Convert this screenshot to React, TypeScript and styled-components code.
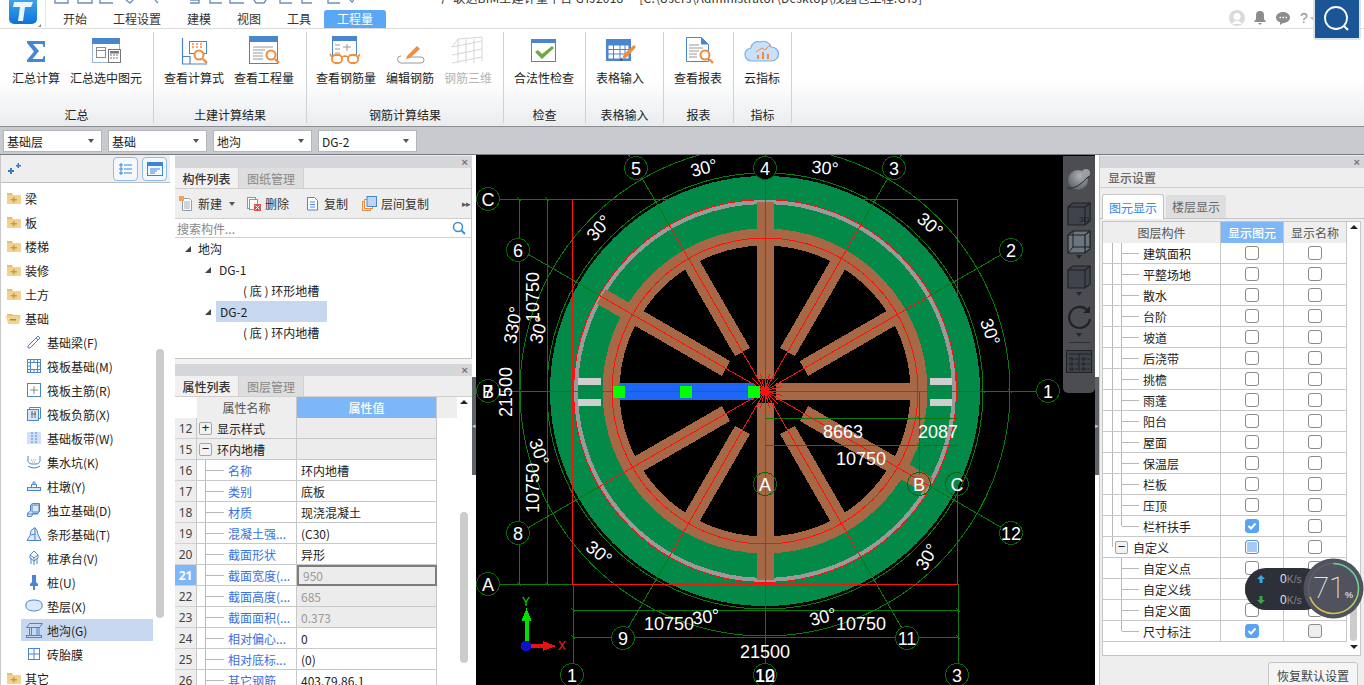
import React from "react";
import styled, { createGlobalStyle } from "styled-components";

const Global = createGlobalStyle`
  html, body { margin: 0; padding: 0; background: #fff; overflow: hidden; }
  * { box-sizing: border-box; }
  body { font-family: "Noto Sans CJK SC", "Noto Sans", sans-serif; font-size: 12px; color: #222; }
`;

const BLUE = "#4a86d0";
const ORANGE = "#f08c3c";

const Page = styled.div`
  position: relative;
  width: 1364px;
  height: 685px;
  overflow: hidden;
  display: flex;
  flex-direction: column;
`;

/* ---------- Top bar ---------- */
const TopBar = styled.header`
  height: 29px;
  flex: none;
  display: flex;
  background: #fff;
  border-bottom: 1px solid #dcdcdc;
`;
const LogoBox = styled.div`
  width: 46px;
  flex: none;
  border-right: 1px solid #e8e8e8;
  overflow: hidden;
`;
const TopMain = styled.div`
  flex: 1;
  display: flex;
  flex-direction: column;
`;
const TitleStrip = styled.div`
  height: 5px;
  margin-bottom: 5px;
  display: flex;
  align-items: flex-end;
  overflow: hidden;
`;
const QuickIcons = styled.svg`
  width: 300px;
  height: 5px;
  margin-left: 8px;
  flex: none;
`;
const TitleText = styled.span`
  margin-left: 87px;
  font-size: 12px;
  line-height: 17px;
  margin-bottom: -1px;
  white-space: pre;
  letter-spacing: 0.2px;
  color: #333;
`;
const TabRow = styled.nav`
  flex: 1;
  display: flex;
  align-items: stretch;
  padding-left: 4px;
`;
const TopTab = styled.div<{ $active?: boolean }>`
  padding: 0 13px;
  display: flex;
  align-items: center;
  line-height: 18px;
  font-size: 12px;
  border-radius: 3px 3px 0 0;
  color: ${(p) => (p.$active ? "#fff" : "#333")};
  background: ${(p) => (p.$active ? "#5aa7f4" : "transparent")};
`;
const Utilities = styled.div`
  margin-left: auto;
  margin-right: 48px;
  display: flex;
  align-items: center;
  gap: 8px;
  height: 18px;
  margin-top: -1px;
`;
const SearchBadge = styled.div`
  position: absolute;
  left: 1313px;
  top: 0;
  width: 48px;
  height: 40px;
  background: #1a5596;
  border: 2px solid #dfe3e8;
  border-top: none;
  border-radius: 0 0 3px 3px;
  display: flex;
  align-items: center;
  justify-content: center;
`;

/* ---------- Ribbon ---------- */
const Ribbon = styled.section`
  height: 98px;
  flex: none;
  display: flex;
  background: linear-gradient(#fff 0%, #fff 52%, #eaecee 100%);
  border-bottom: 1px solid #8b8e93;
  padding-top: 3px;
`;
const RibbonGroup = styled.div<{ $w: number }>`
  width: ${(p) => p.$w}px;
  flex: none;
  height: 91px;
  border-right: 1px solid #cfd1d4;
  display: flex;
  flex-direction: column;
  align-items: center;
`;
const RibbonButtons = styled.div<{ $pad: number }>`
  display: flex;
  gap: 10px;
  height: 72px;
  align-self: flex-start;
  padding-left: ${(p) => p.$pad}px;
`;
const RibbonButton = styled.div<{ $disabled?: boolean }>`
  display: flex;
  flex-direction: column;
  align-items: center;
  color: ${(p) => (p.$disabled ? "#b5b5b5" : "#222")};
  white-space: nowrap;
  font-size: 12px;
  line-height: 16px;
`;
const RibbonIconSvg = styled.svg`
  width: 36px;
  height: 30px;
  margin: 3px 0 5px;
  flex: none;
`;
const GroupLabel = styled.div`
  font-size: 12px;
  line-height: 16px;
  margin-top: 3px;
  color: #222;
`;

/* ---------- Selector bar ---------- */
const SelectorBar = styled.div`
  height: 28px;
  flex: none;
  background: #c8cacf;
  border-bottom: 1px solid #777a80;
  display: flex;
  align-items: flex-start;
  gap: 6px;
  padding: 3px 0 0 3px;
`;
const SelectBox = styled.div`
  width: 99px;
  height: 22px;
  background: #fff;
  border: 1px solid #b4b6ba;
  display: flex;
  align-items: center;
  justify-content: space-between;
  padding: 0 7px 0 3px;
  font-size: 12px;
  color: #222;
`;
const Caret = styled.i<{ $c?: string }>`
  width: 0;
  height: 0;
  border-left: 3.5px solid transparent;
  border-right: 3.5px solid transparent;
  border-top: 4px solid ${(p) => p.$c || "#555"};
  display: block;
`;

/* ---------- Main ---------- */
const Main = styled.main`
  flex: 1;
  display: flex;
  min-height: 0;
  background: #fff;
`;

/* Left list */
const LeftPanel = styled.aside`
  width: 175px;
  flex: none;
  display: flex;
  flex-direction: column;
  padding-right: 5px;
  border-left: 1px solid #c9c9c9;
  height: 100%;
`;
const LeftHeader = styled.div`
  height: 28px;
  flex: none;
  background: #eeeeee;
  border-bottom: 1px solid #bdbdbd;
  display: flex;
  align-items: center;
  padding-left: 6px;
  gap: 4px;
`;
const ToggleButton = styled.div<{ $first?: boolean }>`
  width: 25px;
  height: 24px;
  border: 1px solid #8dbcf0;
  border-radius: 4px;
  background: #f4f8fd;
  display: flex;
  align-items: center;
  justify-content: center;
  margin-left: ${(p) => (p.$first ? "auto" : "0")};
  margin-right: ${(p) => (p.$first ? "0" : "3px")};
`;
const LeftBody = styled.div`
  flex: 1;
  display: flex;
  min-height: 0;
  padding-top: 3px;
`;
const LeftList = styled.div`
  flex: 1;
  min-width: 0;
  display: flex;
  flex-direction: column;
`;
const LeftScroll = styled.div`
  width: 17px;
  flex: none;
  padding: 163px 5px 0 3px;
`;
const Thumb = styled.div<{ $h: number; $w?: number }>`
  width: ${(p) => p.$w || 8}px;
  height: ${(p) => p.$h}px;
  background: #cccccc;
  border-radius: 4px;
`;
const FolderRow = styled.div`
  height: 24px;
  flex: none;
  display: flex;
  align-items: center;
  gap: 4px;
  padding-left: 5px;
  font-size: 12px;
`;
const ItemRow = styled.div<{ $selected?: boolean }>`
  height: 22px;
  flex: none;
  margin: 1px 0 1px 20px;
  display: flex;
  align-items: center;
  padding-left: 4px;
  gap: 4px;
  font-size: 12px;
  background: ${(p) => (p.$selected ? "#c6d7ef" : "transparent")};
`;
const ItemIconSvg = styled.svg`
  width: 18px;
  height: 18px;
  flex: none;
`;

/* Centre column */
const CenterColumn = styled.section`
  width: 297px;
  flex: none;
  display: flex;
  flex-direction: column;
  background: #eee;
  padding-top: 1px;
`;
const CloseBar = styled.div`
  height: 12px;
  flex: none;
  background: #d5d6da;
  display: flex;
  align-items: center;
  justify-content: flex-end;
  padding-right: 4px;
  color: #777;
  font: bold 11px/12px "Liberation Sans", sans-serif;
`;
const PanelTabs = styled.div`
  height: 21px;
  flex: none;
  display: flex;
  background: #eee;
  border-bottom: 1px solid #cfcfcf;
`;
const PanelTab = styled.div<{ $active?: boolean }>`
  width: ${(p) => (p.$active ? 64 : 65)}px;
  display: flex;
  align-items: center;
  justify-content: center;
  font-size: 12px;
  font-weight: ${(p) => (p.$active ? 500 : 400)};
  color: ${(p) => (p.$active ? "#333" : "#888")};
  background: ${(p) => (p.$active ? "#f1f1f1" : "#dedede")};
  border-right: 1px solid #cfcfcf;
`;
const ListPanel = styled.div`
  height: 191px;
  flex: none;
  display: flex;
  flex-direction: column;
  border-right: 1px solid #c5c5c5;
  border-bottom: 1px solid #c5c5c5;
`;
const PanelGap = styled.div`
  height: 5px;
  flex: none;
  background: #f2f2f2;
`;
const ToolRow = styled.div`
  height: 30px;
  flex: none;
  display: flex;
  align-items: center;
  padding-left: 4px;
  font-size: 12px;
  color: #333;
  border-bottom: 1px solid #cfcfcf;
`;
const ToolItem = styled.div<{ $gap: number }>`
  display: flex;
  align-items: center;
  gap: 4px;
  margin-right: ${(p) => p.$gap}px;
`;
const ToolCaret = styled(Caret)`
  margin-left: 3px;
`;
const ToolMore = styled.span`
  margin-left: auto;
  padding-right: 1px;
  font: 9px "Liberation Sans", sans-serif;
  letter-spacing: -1px;
  color: #555;
`;
const SearchRow = styled.div`
  height: 19px;
  flex: none;
  background: #fff;
  display: flex;
  align-items: center;
  justify-content: space-between;
  padding: 0 5px 0 2px;
  color: #888;
  border-bottom: 1px solid #cfcfcf;
`;
const TreeBody = styled.div`
  flex: 1;
  background: #fff;
`;
const TreeRow = styled.div<{ $level: number }>`
  height: 21px;
  display: flex;
  align-items: center;
  padding-left: ${(p) => [10, 30, 68][p.$level]}px;
  gap: ${(p) => (p.$level === 0 ? 7 : 6)}px;
  font-size: 12px;
`;
const TreeArrow = styled.i`
  width: 0;
  height: 0;
  border-bottom: 6px solid #444;
  border-left: 6px solid transparent;
  flex: none;
`;
const TreeLabel = styled.span<{ $selected?: boolean }>`
  display: flex;
  align-items: center;
  height: 21px;
  margin-left: ${(p) => (p.$selected ? "-1px" : "2px")};
  width: ${(p) => (p.$selected ? "111px" : "auto")};
  padding-left: ${(p) => (p.$selected ? "4px" : "0")};
  background: ${(p) => (p.$selected ? "#c6d7ef" : "transparent")};
`;

const PropPanel = styled.div`
  flex: 1;
  min-height: 0;
  display: flex;
  flex-direction: column;
  background: #fff;
`;
const PropBody = styled.div`
  flex: 1;
  display: flex;
  min-height: 0;
  overflow: hidden;
`;
const PropTable = styled.div`
  width: 262px;
  flex: none;
  display: grid;
  grid-template-columns: 22px 100px 140px;
  grid-auto-rows: 21px;
  align-content: start;
`;
const HeadBlank = styled.div`
  background: #fff;
`;
const HeadCell = styled.div<{ $active?: boolean }>`
  display: flex;
  align-items: center;
  justify-content: center;
  font-size: 12px;
  font-weight: ${(p) => (p.$active ? 500 : 400)};
  color: ${(p) => (p.$active ? "#fff" : "#555")};
  background: ${(p) => (p.$active ? "#7db7f7" : "#eeeeee")};
  border-right: 1px solid #c8c8c8;
`;
const NumCell = styled.div<{ $active?: boolean }>`
  display: flex;
  align-items: center;
  justify-content: center;
  font: ${(p) => (p.$active ? "bold" : "normal")} 12px "Noto Sans", sans-serif;
  color: ${(p) => (p.$active ? "#fff" : "#444")};
  background: ${(p) => (p.$active ? "#7db7f7" : "#eeeeee")};
  border-bottom: 1px solid #d2d2d2;
  border-right: 1px solid #c8c8c8;
`;
const NameCell = styled.div<{ $group?: boolean }>`
  display: flex;
  align-items: center;
  font-size: 12px;
  white-space: nowrap;
  overflow: hidden;
  color: ${(p) => (p.$group ? "#222" : "#3a6fe0")};
  background: ${(p) => (p.$group ? "#eeeeee" : "#fff")};
  border-bottom: 1px solid #c8c8c8;
  border-right: 1px solid #c8c8c8;
`;
const Guide = styled.span<{ $end?: boolean; $ml: number; $hidden?: boolean }>`
  align-self: flex-start;
  width: 1px;
  height: ${(p) => (p.$end ? "50%" : "100%")};
  margin-left: ${(p) => p.$ml}px;
  background: ${(p) => (p.$hidden ? "transparent" : "#b8b8b8")};
  flex: none;
`;
const GuideDash = styled.span<{ $w: number }>`
  width: ${(p) => p.$w}px;
  height: 1px;
  background: #b8b8b8;
  margin-right: 4px;
  flex: none;
`;
const ExpandBox = styled.span<{ $ml: number }>`
  width: 13px;
  height: 13px;
  margin: 0 5px 0 ${(p) => p.$ml}px;
  border: 1px solid #a5a5a5;
  border-radius: 2px;
  background: #f2f2f2;
  display: flex;
  align-items: center;
  justify-content: center;
  flex: none;
  font: 13px/12px "Liberation Sans", sans-serif;
  color: #222;
`;
const ValueCell = styled.div<{ $muted?: boolean; $focus?: boolean; $group?: boolean }>`
  display: flex;
  align-items: center;
  padding-left: 4px;
  font-size: 12px;
  color: ${(p) => (p.$muted ? "#999" : "#222")};
  background: ${(p) => (p.$muted || p.$group ? "#ececec" : "#fff")};
  border-bottom: 1px solid #c8c8c8;
  border-right: 1px solid #c8c8c8;
  ${(p) => (p.$focus ? "border: 2px solid #7d7d7d;" : "")}
`;
const PropScroll = styled.div`
  flex: 1;
  display: flex;
  flex-direction: column;
`;
const ScrollHead = styled.div`
  display: flex;
  height: 21px;
  margin-bottom: 94px;
`;
const ScrollHeadBand = styled.div`
  width: 20px;
  background: #eeeeee;
`;
const ArrowUp = styled.i`
  width: 0;
  height: 0;
  border-left: 4px solid transparent;
  border-right: 4px solid transparent;
  border-bottom: 4px solid #222;
  display: block;
`;
const ScrollHeadArrow = styled(ArrowUp)`
  margin: 3px 0 0 3px;
`;
const ArrowDown = styled(ArrowUp)`
  border-bottom: none;
  border-top: 4px solid #222;
`;
const PropThumb = styled(Thumb)`
  margin-left: 23px;
`;

const Splitter = styled.div<{ $w: number }>`
  width: ${(p) => p.$w}px;
  flex: none;
  background: #fff;
  padding-top: 222px;
`;
const SplitterGrip = styled.div`
  height: 98px;
  background: #5e6369;
  display: flex;
  align-items: center;
  justify-content: center;
  color: #c9ccd0;
  font: 7px "Liberation Sans", sans-serif;
`;

/* Canvas */
const CanvasArea = styled.div`
  position: relative;
  width: 619px;
  flex: none;
  background: #000;
  overflow: hidden;
`;
const CanvasSvg = styled.svg`
  display: block;
  width: 619px;
  height: 530px;
`;
const CadText = styled.text`
  fill: #fff;
  font-family: "Liberation Sans", sans-serif;
  font-size: 18px;
  text-anchor: middle;
  dominant-baseline: central;
`;
const Dock = styled.div`
  position: absolute;
  left: 587px;
  top: 1px;
  width: 32px;
  height: 237px;
  background: #4b4d51;
  border-radius: 0 0 5px 5px;
  display: flex;
  flex-direction: column;
  align-items: center;
  padding-top: 10px;
`;
const DockIcon = styled.svg<{ $mb?: number }>`
  width: 26px;
  height: 26px;
  margin-bottom: ${(p) => p.$mb ?? 0}px;
  flex: none;
`;
const DockCaret = styled(Caret)<{ $mt?: number; $mb?: number }>`
  margin-top: ${(p) => p.$mt ?? 0}px;
  margin-bottom: ${(p) => p.$mb ?? 0}px;
`;
const DockDivider = styled.div`
  width: 21px;
  height: 1px;
  background: #2e3034;
  margin: 5px 0;
`;

/* Right panel */
const RightPanel = styled.aside`
  flex: 1;
  min-width: 0;
  display: flex;
  flex-direction: column;
  background: #eeeeee;
  padding-top: 1px;
  border-left: 1px solid #c5c5c5;
`;
const RightTitle = styled.div`
  height: 20px;
  flex: none;
  display: flex;
  align-items: center;
  padding-left: 8px;
  color: #666;
  font-size: 12px;
  font-weight: 500;
  border-bottom: 1px solid #cfd0d4;
`;
const RightTabs = styled.div`
  height: 31px;
  flex: none;
  display: flex;
  align-items: flex-end;
  padding-left: 2px;
  gap: 2px;
  border-bottom: 1px solid #c5c5c5;
`;
const RightTab = styled.div<{ $active?: boolean }>`
  width: ${(p) => (p.$active ? 62 : 60)}px;
  height: ${(p) => (p.$active ? 25 : 23)}px;
  display: flex;
  align-items: center;
  justify-content: center;
  font-size: 12px;
  border-radius: 3px 3px 0 0;
  color: ${(p) => (p.$active ? "#3a82e0" : "#666")};
  background: ${(p) => (p.$active ? "#fff" : "#dedede")};
  border: ${(p) => (p.$active ? "1px solid #c5c5c5" : "none")};
  border-bottom: none;
  margin-bottom: ${(p) => (p.$active ? "-1px" : "0")};
`;
const RightBody = styled.div`
  margin: 2px 0 0 2px;
  width: 259px;
  height: 435px;
  flex: none;
  background: #fff;
  border: 1px solid #c5c5c5;
  display: flex;
`;
const LayerTable = styled.div`
  width: 244px;
  flex: none;
  display: grid;
  grid-template-columns: 118px 63px 63px;
  grid-auto-rows: 21px;
  align-content: start;
`;
const LayerHead = styled.div<{ $active?: boolean }>`
  display: flex;
  align-items: center;
  justify-content: center;
  font-size: 12px;
  font-weight: ${(p) => (p.$active ? 500 : 400)};
  color: ${(p) => (p.$active ? "#fff" : "#555")};
  background: ${(p) => (p.$active ? "#7db7f7" : "#eeeeee")};
  border-right: 1px solid #c5c5c5;
`;
const LayerName = styled.div`
  display: flex;
  align-items: center;
  font-size: 12px;
  border-bottom: 1px solid #c8c8c8;
  border-right: 1px solid #c8c8c8;
  white-space: nowrap;
`;
const LayerCheck = styled.div`
  display: flex;
  align-items: center;
  justify-content: center;
  border-bottom: 1px solid #c8c8c8;
  border-right: 1px solid #c8c8c8;
`;
const CheckBox = styled.span<{ $state: string }>`
  width: 14px;
  height: 14px;
  border-radius: 3px;
  display: flex;
  align-items: center;
  justify-content: center;
  border: 1px solid ${(p) => (p.$state === "on" ? "#5aa2f4" : p.$state === "part" ? "#5f8fc8" : "#8b8b8b")};
  background: ${(p) =>
    p.$state === "on" ? "#5aa2f4" : p.$state === "part" ? "#a3c9f9" : p.$state === "off2" ? "#eeeeee" : "#fff"};
  box-shadow: ${(p) => (p.$state === "part" ? "inset 0 0 0 1px #fff" : "none")};
`;
const RightScroll = styled.div`
  flex: 1;
  display: flex;
  flex-direction: column;
  align-items: center;
  padding-top: 3px;
`;
const RightThumbSpace = styled.div`
  flex: 1;
`;
const RightScrollEnd = styled(ArrowDown)`
  margin: 4px 0 6px;
`;
const ResetRow = styled.div`
  flex: 1;
  display: flex;
  justify-content: flex-end;
  padding: 6px 6px 0 0;
`;
const ResetButton = styled.div`
  width: 90px;
  height: 26px;
  background: #f5f5f5;
  border: 1px solid #c5c5c5;
  border-radius: 3px 3px 0 0;
  display: flex;
  align-items: center;
  justify-content: center;
  font-size: 12px;
  color: #444;
`;

/* Floating meter */
const Meter = styled.div`
  position: absolute;
  left: 1245px;
  top: 558px;
  width: 119px;
  height: 62px;
`;
const MeterPill = styled.div`
  position: absolute;
  left: 0;
  top: 10px;
  width: 80px;
  height: 42px;
  border-radius: 21px;
  background: #2d3038;
  display: flex;
  flex-direction: column;
  justify-content: center;
  gap: 5px;
  padding-left: 12px;
  font: 9px "Liberation Sans", sans-serif;
`;
const MeterLine = styled.div`
  display: flex;
  align-items: center;
  height: 16px;
  gap: 15px;
`;
const MeterRate = styled.span`
  font-size: 10.5px;
  color: #7f858d;
  b {
    font-weight: 400;
    font-size: 12px;
    color: #dfe2e6;
  }
`;
const MeterDial = styled.svg`
  position: absolute;
  left: 58px;
  top: 0;
  width: 61px;
  height: 61px;
`;

/* ---------- Icons ---------- */
const Logo = () => (
  <svg width="46" height="28" viewBox="0 0 46 28">
    <defs>
      <linearGradient id="lg" x1="0" y1="0" x2="0" y2="1">
        <stop offset="0" stopColor="#4fb2f5" />
        <stop offset="1" stopColor="#0d74d8" />
      </linearGradient>
    </defs>
    <rect x="9" y="-8" width="28" height="32" rx="5" fill="url(#lg)" />
    <path d="M14 2h19l-2 5h-6l-2 14h-5l2-14h-7z" fill="#e9f6ff" />
    <path d="M41 24l-3 3h3z" fill="#888" />
  </svg>
);

const RibbonIcon = ({ kind }: { kind: string }) => {
  const stroke = { fill: "none", stroke: BLUE, strokeWidth: 1 };
  const glass = (cx: number, cy: number, r = 4.5) => (
    <g fill="none" stroke={ORANGE} strokeWidth="2">
      <circle cx={cx} cy={cy} r={r} fill="#fff" />
      <path d={`M${cx + r - 0.5} ${cy + r - 0.5}l4 4`} strokeWidth="2.4" />
    </g>
  );
  switch (kind) {
    case "sigma":
      return (
        <RibbonIconSvg viewBox="0 0 36 30">
          <path d="M9 6h18v6h-1.500l-1-3H15l6 7-6.500 8h10l1.300-3H27v6H9v-2l7-8.600L9 8z" fill={BLUE} />
        </RibbonIconSvg>
      );
    case "window":
      return (
        <RibbonIconSvg viewBox="0 0 36 30">
          <rect x="4.500" y="3.500" width="27" height="24" fill="#fff" stroke="#9ab8dc" />
          <rect x="4" y="3" width="28" height="6" fill={BLUE} />
          <rect x="8.500" y="15.500" width="9" height="7" fill="none" stroke="#8a8a8a" />
          <rect x="8.500" y="12.500" width="9" height="3" fill="none" stroke="#8a8a8a" />
          <rect x="20.500" y="14.500" width="12" height="13" fill="#fff" stroke="#777" />
          <rect x="22" y="16" width="9" height="2.500" fill="#777" />
          <path d="M22 20h2M25 20h2M28 20h2M22 23h2M25 23h2M28 23h2" stroke="#777" />
        </RibbonIconSvg>
      );
    case "formula":
      return (
        <RibbonIconSvg viewBox="0 0 36 30">
          <path d="M6.500 3v26H31M6.500 21.500H14V29" {...stroke} strokeWidth={1.2} />
          <rect x="13.500" y="6.500" width="17" height="12" fill="#fff" stroke={BLUE} />
          <path d="M16 9h2M20 9h2M24 9h2M16 12h2M20 12h2M24 12h2" stroke={ORANGE} strokeWidth="1.600" />
          {glass(23, 20)}
        </RibbonIconSvg>
      );
    case "quantity":
      return (
        <RibbonIconSvg viewBox="0 0 36 30">
          <rect x="3.500" y="1.500" width="28" height="27" fill="#fff" stroke={BLUE} />
          <rect x="3" y="1" width="29" height="6" fill={BLUE} />
          <path d="M7 12h20M7 15h12M7 18h10M7 21h10M7 24h10" stroke="#999" />
          {glass(25, 20)}
        </RibbonIconSvg>
      );
    case "glasses":
      return (
        <RibbonIconSvg viewBox="0 0 36 30">
          <rect x="4.500" y="1.500" width="24" height="20" fill="#fff" stroke={BLUE} />
          <rect x="4" y="1" width="25" height="5" fill={BLUE} />
          <path d="M7 10h5M7 14h5M7 18h5M19 9v7M15 12h8" stroke="#999" />
          <g fill="#fff" stroke={ORANGE} strokeWidth="1.800">
            <rect x="4" y="20" width="10" height="8" rx="3.500" />
            <rect x="20" y="20" width="10" height="8" rx="3.500" />
          </g>
          <path d="M14 22q3-2 6 0M4 22l-2-3M30 22l2-3" fill="none" stroke={ORANGE} strokeWidth="1.500" />
        </RibbonIconSvg>
      );
    case "edit":
      return (
        <RibbonIconSvg viewBox="0 0 36 30">
          <path d="M9 21a3 3 0 0 0 0 7h20a3 3 0 0 0 0-6H18" fill="none" stroke="#9a9a9a" />
          <path d="M15 21l10-10 3 3-10 9-4 1z" fill={ORANGE} />
        </RibbonIconSvg>
      );
    case "mesh":
      return (
        <RibbonIconSvg viewBox="0 0 36 30" opacity="0.7">
          <path d="M8 4v24M16 4v24M24 4v24M32 2v24M2 12l30-6M2 20l30-6M2 28l30-6M8 4l24-2M2 12l6-8" fill="none" stroke="#c6c6c6" />
        </RibbonIconSvg>
      );
    case "check":
      return (
        <RibbonIconSvg viewBox="0 0 36 30">
          <rect x="5.500" y="4.500" width="24" height="22" fill="#fff" stroke={BLUE} />
          <rect x="5" y="4" width="25" height="4" fill={BLUE} />
          <path d="M9 17l3-2 4 4 10-8 2 2-12 11z" fill="#6fa84c" />
        </RibbonIconSvg>
      );
    case "table":
      return (
        <RibbonIconSvg viewBox="0 0 36 30">
          <rect x="4" y="4" width="25" height="22" fill={BLUE} />
          <path d="M6 10h21v14H6zM5 14.500h22M5 19h22M11.500 10v14M18 10v14M23 10v14" fill="#fff" stroke={BLUE} />
          <path d="M20 24l2-5 10-9 2 2-9 10z" fill={ORANGE} />
          <path d="M18 26l3-1-2-2z" fill="#444" />
        </RibbonIconSvg>
      );
    case "report":
      return (
        <RibbonIconSvg viewBox="0 0 36 30">
          <path d="M6.500 2.500h15l7 7v17h-22z" fill="#fff" stroke={BLUE} />
          <path d="M21 2.500v7h7.500z" fill={BLUE} />
          <path d="M9 10h10M9 13h14M9 16h10M9 19h8M9 22h8" stroke="#999" />
          {glass(25, 20, 4.5)}
        </RibbonIconSvg>
      );
    default:
      return (
        <RibbonIconSvg viewBox="0 0 36 30">
          <path
            d="M8 26a6.500 6.500 0 0 1-1-13 7 7 0 0 1 9-6 8 8 0 0 1 11 5 7 7 0 0 1 1 14z"
            fill="#c9e0f8"
            stroke="#7ab0ea"
            strokeWidth="1.200"
          />
          <path d="M13 24v-4h2v4zM18 24v-7h2v7zM23 24v-5h2v5z" fill={ORANGE} />
          <path d="M12 17l6-4 3 2 5-5" fill="none" stroke={ORANGE} />
        </RibbonIconSvg>
      );
  }
};

const FolderSvg = styled.svg`
  width: 15px;
  height: 14px;
  flex: none;
`;

const Folder = ({ open }: { open?: boolean }) => (
  <FolderSvg viewBox="0 0 15 14">
    {open ? (
      <>
        <path d="M1 3h5l1 1h7v2H1z" fill="#e5c07a" />
        <path d="M0 5h15l-2 8H2z" fill="#f3d28f" />
        <rect x="4" y="8" width="6" height="1.500" fill="#a98545" />
      </>
    ) : (
      <>
        <path d="M1 2h5l1 2h7v1H1z" fill="#e2bd76" />
        <rect x="1" y="4" width="14" height="9" fill="#f3d28f" />
        <path d="M7 6h1.500v2H11v1.500H8.500v2H7v-2H4.500V8H7z" fill="#c9994a" />
      </>
    )}
  </FolderSvg>
);

const ItemIcon = ({ kind }: { kind: number }) => {
  const s = { fill: "none", stroke: BLUE, strokeWidth: 1 };
  const shapes: React.ReactNode[] = [
    <path d="M3 13L13 3l2 2L5 15H3zM11 5l2 2" {...s} />,
    <g {...s}><rect x="2.500" y="2.500" width="13" height="13" /><rect x="5.500" y="5.500" width="7" height="7" /><path d="M2 5.500h3M2 9h3M13 5.500h3M13 9h3M13 12.500h3M2 12.500h3M5.500 2v3M9 2v3M12.500 2v3M5.500 13v3M9 13v3M12.500 13v3" /></g>,
    <g {...s}><rect x="2.500" y="2.500" width="13" height="13" /><path d="M9 5v8M5 9h8" stroke="#888" /></g>,
    <g {...s}><rect x="2.500" y="4.500" width="11" height="11" fill="#d7e5f6" /><path d="M4.500 4.500v-2h11v11h-2" /><path d="M7 6v7M10 6v7M6 9h5" stroke="#666" /></g>,
    <g><rect x="2" y="3" width="14" height="12" fill="#cfe1f6" /><path d="M7 3v12M11 3v12" stroke={BLUE} strokeDasharray="2 1" /></g>,
    <g {...s}><path d="M3 3v3a4 4 0 0 0 4 5h4a4 4 0 0 0 4-5V3M3 13q6 4 12 0" /><path d="M6 7h6M7 9h4" stroke="#999" strokeDasharray="1 1" /></g>,
    <g {...s}><rect x="2.500" y="10.500" width="13" height="3" fill="#dce9f8" /><path d="M6.500 10.500V7.500h5v3M8 7.500V5h2v2.500" /></g>,
    <g {...s}><path d="M2.500 15.500V12l3-2V4l2-1.500h7v8l-2 2H8l-1.500 3z" fill="#dce9f8" /><path d="M7 4h7v7H7zM2.500 13h11" /></g>,
    <g {...s}><path d="M2 15.500l3-5 1-5 4-3 2 3 1 4 3 6z" fill="#dce9f8" /><path d="M6 10l4-1v7M10 3v6" /></g>,
    <g {...s}><path d="M9 2l4 4v3l-4 3-4-3V6zM6 9v6M9 9v7M12 9v6M5 6l4 3 4-3" /></g>,
    <g fill={BLUE}><path d="M7 2h4v7l2 2v2H5v-2l2-2z" /><path d="M8 13h2v4H8z" /></g>,
    <g {...s}><ellipse cx="9" cy="7" rx="8" ry="4" fill="#dce9f8" /><path d="M1 7v3c0 2 4 4 8 4s8-2 8-4V7" fill="#dce9f8" /></g>,
    <g {...s}><rect x="1.500" y="14.500" width="15" height="2" /><rect x="4.500" y="6.500" width="2" height="8" /><rect x="12" y="6.500" width="2" height="8" /><path d="M1.500 6.500l3-4h13l-3 4z" /><path d="M1.500 6.500h13" /></g>,
    <g {...s}><rect x="3.500" y="3.500" width="11" height="11" /><path d="M9 3v11M3 9h11" /></g>
  ];
  return <ItemIconSvg viewBox="0 0 18 18">{shapes[kind]}</ItemIconSvg>;
};

const Mag = ({ c = "#3a8dc8", size = 14 }: { c?: string; size?: number }) => (
  <svg width={size} height={size} viewBox="0 0 14 14">
    <circle cx="6" cy="6" r="4.500" fill="none" stroke={c} strokeWidth="1.500" />
    <path d="M9.500 9.500l3.500 3.500" stroke={c} strokeWidth="1.800" />
  </svg>
);

const ToolIconSvg = styled.svg`
  width: 15px;
  height: 15px;
  flex: none;
`;

const ToolIcon = ({ kind }: { kind: number }) => (
  <ToolIconSvg viewBox="0 0 15 15">
    {kind === 0 && (
      <>
        <path d="M3.500 2.500h7l2 2v10h-9z" fill="#fff" stroke="#8aa0b8" />
        <path d="M5 6h6M5 8h6M5 10h6M5 12h6" stroke="#aaa" />
        <rect x="0" y="0" width="5" height="5" fill="#f5a050" />
      </>
    )}
    {kind === 1 && (
      <>
        <rect x="1.500" y="1.500" width="8" height="11" fill="#fff" stroke="#8a97a8" />
        <rect x="3.500" y="3.500" width="8" height="10" fill="#fff" stroke="#8a97a8" />
        <rect x="8" y="8" width="7" height="7" fill="#dc5050" />
        <path d="M9.500 9.500l4 4M13.500 9.500l-4 4" stroke="#fff" />
      </>
    )}
    {kind === 2 && (
      <path d="M2.500 1.500h7l3 3v9.500h-10zM5 6h5M5 8.500h5M5 11h5" fill="#fff" stroke="#4a86d0" />
    )}
    {kind === 3 && (
      <>
        <rect x="0.500" y="5.500" width="8" height="9" fill="none" stroke="#f08c3c" />
        <rect x="2.500" y="3.500" width="8" height="9" fill="#fff" stroke="#f08c3c" />
        <rect x="5" y="0.500" width="9.500" height="10" fill="#bdd6f3" stroke="#4a86d0" />
      </>
    )}
  </ToolIconSvg>
);

const CheckMark = () => (
  <svg width="10" height="10" viewBox="0 0 10 10">
    <path d="M1.500 5l2.500 2.500 4.500-5" fill="none" stroke="#fff" strokeWidth="2" />
  </svg>
);

/* ---------- Canvas drawing ---------- */
const CX = 765;
const CY = 391;
const pol = (r: number, deg: number) => ({
  x: CX + r * Math.cos((deg * Math.PI) / 180),
  y: CY - r * Math.sin((deg * Math.PI) / 180)
});
const GREEN_LINE = "#0a7a0a";
const RING = "#0a650a";
const BROWN = "#a66845";
const RED = "#ff1010";

const spokes = [
  { a: 0, r0: 11, r1: 150 },
  { a: 30, r0: 45, r1: 150 },
  { a: 60, r0: 45, r1: 150 },
  { a: 90, r0: 12, r1: 189 },
  { a: 120, r0: 45, r1: 150 },
  { a: 150, r0: 45, r1: 189 },
  { a: 210, r0: 45, r1: 150 },
  { a: 240, r0: 45, r1: 150 },
  { a: 270, r0: 12, r1: 189 },
  { a: 300, r0: 45, r1: 150 },
  { a: 330, r0: 45, r1: 189 }
];

const axisCircles: [number, number, string][] = [
  [636, 168, "5"], [765, 168, "4"], [894, 168, "3"], [1011, 250, "2"], [1048, 391, "1"],
  [518, 250, "6"], [488, 199, "C"], [488, 391, "B"], [488, 391, "7"], [488, 584, "A"],
  [518, 533, "8"], [623, 638, "9"], [765, 675, "10"], [765, 675, "12"], [907, 638, "11"],
  [1011, 533, "12"], [572, 675, "1"], [957, 675, "3"], [765, 484, "A"], [919, 484, "B"], [957, 484, "C"]
];

const labels: [number, number, string, number][] = [
  [704, 168, "30°", -15], [825, 168, "30°", 5], [599, 228, "30°", -50], [930, 225, "30°", 40],
  [990, 332, "30°", 70], [513, 325, "330°", -80], [539, 330, "30°", -75], [533, 297, "10750", -90],
  [506, 392, "21500", -90], [539, 452, "30°", 70], [533, 488, "10750", -90], [599, 553, "30°", 38],
  [706, 617, "30°", -8], [669, 624, "10750", 0], [765, 652, "21500", 0], [823, 617, "30°", -15],
  [861, 624, "10750", 0], [927, 557, "30°", -60], [843, 432, "8663", 0], [938, 432, "2087", 0], [861, 459, "10750", 0]
];

const greenLines: [number, number, number, number][] = [
  [489, 199, 573, 199], [489, 391, 1036, 391], [489, 584, 958, 584],
  [519, 199, 519, 584], [547, 199, 547, 584],
  [573, 584, 573, 665], [765, 155, 765, 664], [958, 584, 958, 665],
  [573, 610, 958, 610], [573, 637, 958, 637],
  [765, 418, 958, 418], [765, 445, 958, 445], [919, 391, 919, 474]
];

const CanvasDrawing = () => (
  <CanvasSvg viewBox="476 155 619 530" shapeRendering="crispEdges">
    <circle cx={CX} cy={CY} r="215" fill="#038a48" />
    <circle cx={CX} cy={CY} r="189" fill="none" stroke="#9a9a9a" strokeWidth="4" />
    <circle cx={CX} cy={CY} r="154" fill="#000" stroke={BROWN} strokeWidth="17" />
    {spokes.map((s) => (
      <rect
        key={s.a}
        x={CX + s.r0}
        y={CY - 8.5}
        width={s.r1 - s.r0}
        height="17"
        fill={BROWN}
        transform={`rotate(${-s.a} ${CX} ${CY})`}
      />
    ))}
    <path d="M578 378h23v7h-23zM578 399h23v7h-23zM930 378h22v7h-22zM930 399h22v7h-22z" fill="#cfcfcf" />
    <rect x="619" y="383" width="135" height="17" fill="#1e66f5" />

    <g fill="none" stroke={GREEN_LINE} strokeWidth="1">
      <circle cx={CX} cy={CY} r="218" />
      <circle cx={CX} cy={CY} r="245" />
      {greenLines.map((l, i) => (
        <line key={i} x1={l[0]} y1={l[1]} x2={l[2]} y2={l[3]} />
      ))}
      {[30, 60, 120, 150, 210, 240, 300, 330].map((a) => {
        const p = pol(190, a);
        const q = pol(273, a);
        return <line key={a} x1={p.x} y1={p.y} x2={q.x} y2={q.y} />;
      })}
      {[[519, 199], [547, 199], [519, 584], [547, 584], [573, 610], [958, 610], [573, 637], [958, 637], [983, 391], [1010, 391], [919, 418], [919, 445]].map(
        ([x, y], i) => (
          <path key={i} d={`M${x - 2} ${y - 2}l4 4`} />
        )
      )}
    </g>

    <g fill="none" stroke={RED} strokeWidth="1">
      <rect x="572.500" y="199.500" width="385" height="385" />
      <circle cx={CX} cy={CY} r="191.500" />
      <circle cx={CX} cy={CY} r="153" />
      {Array.from({ length: 12 }, (_, i) => {
        const p = pol(192, i * 30);
        return <line key={i} x1={CX} y1={CY} x2={p.x} y2={p.y} />;
      })}
      {Array.from({ length: 12 }, (_, i) => {
        const p = pol(18, i * 30 + 15);
        return <line key={i} x1={CX} y1={CY} x2={p.x} y2={p.y} />;
      })}
      <line x1="746" y1="583.500" x2="793" y2="583.500" strokeWidth="2" />
      <line x1="956.500" y1="372" x2="956.500" y2="391" strokeWidth="2" />
    </g>

    <g fill="#00ff00">
      <rect x="613" y="386" width="12" height="12" />
      <rect x="680" y="386" width="12" height="12" />
      <rect x="748" y="386" width="12" height="12" />
    </g>

    <g fill="#000" stroke={RING}>
      {axisCircles.map((c, i) => (
        <circle key={i} cx={c[0]} cy={c[1]} r="11.500" fillOpacity={c[1] === 484 ? 0 : 1} />
      ))}
    </g>
    {axisCircles.map((c, i) => (
      <CadText key={i} x={c[0]} y={c[1] + 1}>
        {c[2]}
      </CadText>
    ))}
    {labels.map((l, i) => (
      <CadText key={i} x={l[0]} y={l[1]} transform={l[3] ? `rotate(${l[3]} ${l[0]} ${l[1]})` : undefined}>
        {l[2]}
      </CadText>
    ))}

    {/* UCS triad */}
    <rect x="524.500" y="616" width="4" height="28" fill="#00e000" />
    <path d="M526.500 608l5 13h-10z" fill="#00e000" />
    <rect x="530" y="644" width="15" height="4" fill="#e81010" />
    <path d="M556 646l-13 5v-10z" fill="#e81010" />
    <circle cx="526" cy="646" r="5.500" fill="#1010c8" />
    <CadText x="526" y="602" style={{ fill: "#00e000", fontSize: 12 }}>Y</CadText>
    <CadText x="562" y="646" style={{ fill: "#ff2020", fontSize: 12 }}>X</CadText>
  </CanvasSvg>
);

const DockCube = ({ kind }: { kind: number }) => (
  <DockIcon viewBox="0 0 26 26" $mb={kind === 0 ? 2 : 0}>
    <path d="M2 6l5-4h17v18l-5 4H2z" fill={kind === 1 ? "#6b7580" : "#3f444c"} stroke="#1f2125" strokeWidth="1.200" />
    <path d="M2 6h17v18M19 6l5-4" fill="none" stroke="#1f2125" strokeWidth="1.200" />
    {kind === 1 && <path d="M7 2v16l-5 6M7 18h17" fill="none" stroke="#1f2125" />}
    {kind === 0 && (
      <text x="13" y="21" fontSize="8" fill="#1c1e22" fontFamily="Liberation Sans, sans-serif">
        3D
      </text>
    )}
  </DockIcon>
);

/* ---------- Data ---------- */
const ribbonGroups = [
  { w: 154, pad: 12, label: "汇总", items: [["sigma", "汇总计算"], ["window", "汇总选中图元"]] },
  { w: 153, pad: 10, label: "土建计算结果", items: [["formula", "查看计算式"], ["quantity", "查看工程量"]] },
  { w: 197, pad: 9, label: "钢筋计算结果", items: [["glasses", "查看钢筋量"], ["edit", "编辑钢筋"], ["mesh", "钢筋三维"]] },
  { w: 82, pad: 10, label: "检查", items: [["check", "合法性检查"]] },
  { w: 78, pad: 10, label: "表格输入", items: [["table", "表格输入"]] },
  { w: 70, pad: 10, label: "报表", items: [["report", "查看报表"]] },
  { w: 58, pad: 10, label: "指标", items: [["cloud", "云指标"]] }
];

const subItems = [
  "基础梁(F)", "筏板基础(M)", "筏板主筋(R)", "筏板负筋(X)", "基础板带(W)", "集水坑(K)", "柱墩(Y)",
  "独立基础(D)", "条形基础(T)", "桩承台(V)", "桩(U)", "垫层(X)", "地沟(G)", "砖胎膜"
];

const propRows = [
  { n: 16, name: "名称", v: "环内地槽" },
  { n: 17, name: "类别", v: "底板" },
  { n: 18, name: "材质", v: "现浇混凝土" },
  { n: 19, name: "混凝土强...", v: "(C30)" },
  { n: 20, name: "截面形状", v: "异形" },
  { n: 21, name: "截面宽度(...", v: "950", muted: true, focus: true },
  { n: 22, name: "截面高度(...", v: "685", muted: true },
  { n: 23, name: "截面面积(...", v: "0.373", muted: true },
  { n: 24, name: "相对偏心...", v: "0" },
  { n: 25, name: "相对底标...", v: "(0)" },
  { n: 26, name: "其它钢筋", v: "403.79.86.1" }
];

const layers1 = ["建筑面积", "平整场地", "散水", "台阶", "坡道", "后浇带", "挑檐", "雨蓬", "阳台", "屋面", "保温层", "栏板", "压顶", "栏杆扶手"];
const layers2 = ["自定义点", "自定义线", "自定义面", "尺寸标注"];

const LayerLeaf = ({ name, end, outer = true }: { name: string; end?: boolean; outer?: boolean }) => (
  <LayerName>
    <Guide $ml={9} $hidden={!outer} />
    <Guide $ml={8} $end={end} />
    <GuideDash $w={17} />
    <span>{name}</span>
  </LayerName>
);

const Check = ({ state = "off" }: { state?: string }) => (
  <LayerCheck>
    <CheckBox $state={state}>{state === "on" && <CheckMark />}</CheckBox>
  </LayerCheck>
);

/* ---------- App ---------- */
export default function App() {
  return (
    <Page>
      <Global />
      <TopBar>
        <LogoBox>
          <Logo />
        </LogoBox>
        <TopMain>
          <TitleStrip>
            <QuickIcons viewBox="0 0 300 5">
              <path
                d="M1 0v3h13V0M24 0v3h14V0M46 0v3h13M72 0l4 3 3-3M101 0l3 3M136 0h9v3h-9M156 0v3h12M176 0v3h14M200 0l2 3h8l2-3M226 0v3h12M248 0v3h10M274 0v3h12M296 0l2 2 2-2"
                fill="none"
                stroke="#6d90bd"
                strokeWidth="1.400"
              />
            </QuickIcons>
            <TitleText>{"广联达BIM土建计量平台 GTJ2018  -  [C:\\Users\\Administrator\\Desktop\\茂园包工程.GTJ]"}</TitleText>
          </TitleStrip>
          <TabRow>
            {["开始", "工程设置", "建模", "视图", "工具"].map((t) => (
              <TopTab key={t}>{t}</TopTab>
            ))}
            <TopTab $active>工程量</TopTab>
            <Utilities>
              <svg width="16" height="16" viewBox="0 0 16 16">
                <circle cx="8" cy="8" r="8" fill="#dadada" />
                <circle cx="8" cy="6.500" r="3.500" fill="#fff" />
                <path d="M2.500 14q5.500-7 11 0" fill="#fff" />
              </svg>
              <svg width="14" height="16" viewBox="0 0 14 16">
                <path d="M7 1a4 4 0 0 1 4 4v4l2 3H1l2-3V5a4 4 0 0 1 4-4zM5 13h4l-2 2z" fill="#8d8d8d" />
              </svg>
              <svg width="16" height="14" viewBox="0 0 16 14">
                <path d="M8 1c4 0 7 2.500 7 5.500S12 12 8 12l-3 2v-2.700C2.500 10.500 1 8.700 1 6.500 1 3.500 4 1 8 1z" fill="#8d8d8d" />
                <path d="M4.500 6.500h1.500M7.500 6.500H9M10.500 6.500H12" stroke="#fff" strokeWidth="1.500" />
              </svg>
              <svg width="17" height="16" viewBox="0 0 17 16">
                <text x="5" y="13" fontSize="14" fill="#8d8d8d" textAnchor="middle" fontFamily="Liberation Sans, sans-serif">
                  ?
                </text>
                <path d="M11 7h5l-2.500 3z" fill="#bbb" />
              </svg>
            </Utilities>
          </TabRow>
        </TopMain>
      </TopBar>
      <SearchBadge>
        <svg width="30" height="30" viewBox="0 0 30 30">
          <circle cx="14" cy="14" r="11" fill="none" stroke="#fff" strokeWidth="1.800" />
          <path d="M22 22l4 4" stroke="#fff" strokeWidth="2.200" />
        </svg>
      </SearchBadge>

      <Ribbon>
        {ribbonGroups.map((g) => (
          <RibbonGroup key={g.label + g.w} $w={g.w}>
            <RibbonButtons $pad={g.pad}>
              {g.items.map(([k, label]) => (
                <RibbonButton key={label} $disabled={k === "mesh"}>
                  <RibbonIcon kind={k} />
                  {label}
                </RibbonButton>
              ))}
            </RibbonButtons>
            <GroupLabel>{g.label}</GroupLabel>
          </RibbonGroup>
        ))}
      </Ribbon>

      <SelectorBar>
        {["基础层", "基础", "地沟", "DG-2"].map((t) => (
          <SelectBox key={t}>
            {t}
            <Caret />
          </SelectBox>
        ))}
      </SelectorBar>

      <Main>
        <LeftPanel>
          <LeftHeader>
            <svg width="14" height="12" viewBox="0 0 14 12">
              <path d="M1 7h2V5h2v2h2v2H5v2H3V9H1zM9 2h1.500V0H12v2h2v1.500h-2V5h-1.500V3.500H9z" fill="#3a78c8" />
            </svg>
            <ToggleButton $first>
              <svg width="14" height="14" viewBox="0 0 14 14">
                <path d="M1 2h2v2H1zM1 6h2v2H1zM1 10h2v2H1z" fill="none" stroke="#3a86d8" />
                <path d="M5 3h8M5 7h8M5 11h8" stroke="#3a86d8" />
              </svg>
            </ToggleButton>
            <ToggleButton>
              <svg width="16" height="14" viewBox="0 0 16 14">
                <rect x="0.500" y="0.500" width="15" height="13" fill="none" stroke="#3a86d8" />
                <rect x="1" y="1" width="14" height="3" fill="#3a86d8" />
                <path d="M3 7h10M3 9h7M3 11h5" stroke="#3a86d8" />
              </svg>
            </ToggleButton>
          </LeftHeader>
          <LeftBody>
            <LeftList>
              {["梁", "板", "楼梯", "装修", "土方"].map((t) => (
                <FolderRow key={t}>
                  <Folder />
                  {t}
                </FolderRow>
              ))}
              <FolderRow>
                <Folder open />
                基础
              </FolderRow>
              {subItems.map((t, i) => (
                <ItemRow key={t} $selected={t === "地沟(G)"}>
                  <ItemIcon kind={i} />
                  {t}
                </ItemRow>
              ))}
              <FolderRow>
                <Folder />
                其它
              </FolderRow>
            </LeftList>
            <LeftScroll>
              <Thumb $h={269} />
            </LeftScroll>
          </LeftBody>
        </LeftPanel>

        <CenterColumn>
          <CloseBar>×</CloseBar>
          <ListPanel>
            <PanelTabs>
              <PanelTab $active>构件列表</PanelTab>
              <PanelTab>图纸管理</PanelTab>
            </PanelTabs>
            <ToolRow>
              <ToolItem $gap={11}>
                <ToolIcon kind={0} />
                新建
                <ToolCaret $c="#555" />
              </ToolItem>
              <ToolItem $gap={16}>
                <ToolIcon kind={1} />
                删除
              </ToolItem>
              <ToolItem $gap={14}>
                <ToolIcon kind={2} />
                复制
              </ToolItem>
              <ToolItem $gap={0}>
                <ToolIcon kind={3} />
                层间复制
              </ToolItem>
              <ToolMore>▸▸</ToolMore>
            </ToolRow>
            <SearchRow>
              搜索构件...
              <Mag />
            </SearchRow>
            <TreeBody>
              <TreeRow $level={0}>
                <TreeArrow />
                <span>地沟</span>
              </TreeRow>
              <TreeRow $level={1}>
                <TreeArrow />
                <TreeLabel>DG-1</TreeLabel>
              </TreeRow>
              <TreeRow $level={2}>( 底 ) 环形地槽</TreeRow>
              <TreeRow $level={1}>
                <TreeArrow />
                <TreeLabel $selected>DG-2</TreeLabel>
              </TreeRow>
              <TreeRow $level={2}>( 底 ) 环内地槽</TreeRow>
            </TreeBody>
          </ListPanel>
          <PanelGap />
          <CloseBar>×</CloseBar>
          <PropPanel>
            <PanelTabs>
              <PanelTab $active>属性列表</PanelTab>
              <PanelTab>图层管理</PanelTab>
            </PanelTabs>
            <PropBody>
              <PropTable>
                <HeadBlank />
                <HeadCell>属性名称</HeadCell>
                <HeadCell $active>属性值</HeadCell>
                <NumCell>12</NumCell>
                <NameCell $group>
                  <ExpandBox $ml={2}>+</ExpandBox>显示样式
                </NameCell>
                <ValueCell $group />
                <NumCell>15</NumCell>
                <NameCell $group>
                  <ExpandBox $ml={2}>−</ExpandBox>环内地槽
                </NameCell>
                <ValueCell $group />
                {propRows.map((r) => (
                  <React.Fragment key={r.n}>
                    <NumCell $active={r.focus}>{r.n}</NumCell>
                    <NameCell>
                      <Guide $ml={8} />
                      <GuideDash $w={18} />
                      {r.name}
                    </NameCell>
                    <ValueCell $muted={r.muted} $focus={r.focus}>
                      {r.v}
                    </ValueCell>
                  </React.Fragment>
                ))}
              </PropTable>
              <PropScroll>
                <ScrollHead>
                  <ScrollHeadBand />
                  <ScrollHeadArrow />
                </ScrollHead>
                <PropThumb $h={151} />
              </PropScroll>
            </PropBody>
          </PropPanel>
        </CenterColumn>

        <Splitter $w={4}>
          <SplitterGrip>◂</SplitterGrip>
        </Splitter>

        <CanvasArea>
          <CanvasDrawing />
          <Dock>
            <DockIcon viewBox="0 0 26 26" $mb={9}>
              <defs>
                <radialGradient id="sph" cx="0.6" cy="0.3" r="0.8">
                  <stop offset="0" stopColor="#aeb3b8" />
                  <stop offset="1" stopColor="#55595e" />
                </radialGradient>
              </defs>
              <circle cx="12" cy="14" r="10" fill="url(#sph)" />
              <circle cx="20" cy="7" r="4" fill="#9a9ea3" />
              <path d="M1 22q10 2 22-12" fill="none" stroke="#2d2f33" />
            </DockIcon>
            <DockCube kind={0} />
            <DockCube kind={1} />
            <DockCaret $c="#25272a" $mb={5} />
            <DockCube kind={2} />
            <DockCaret $c="#25272a" $mt={2} $mb={8} />
            <DockIcon viewBox="0 0 26 26" $mb={3}>
              <path d="M21 6a10.500 10.500 0 1 0 3 9" fill="none" stroke="#1f2125" strokeWidth="2.200" />
              <path d="M24 2v7h-7z" fill="#1f2125" />
            </DockIcon>
            <Caret $c="#25272a" />
            <DockDivider />
            <DockIcon viewBox="0 0 26 26">
              <rect x="0.500" y="2.500" width="25" height="22" fill="#3e4249" stroke="#1f2125" />
              <path d="M3 6h22M13 6v17M4 10h3v2H4zM4 15h3v2H4zM4 20h3v2H4zM16 10h3v2h-3zM16 15h3v2h-3zM16 20h3v2h-3zM9 11h3M9 16h3M9 21h3M21 11h3M21 16h3M21 21h3" fill="none" stroke="#1f2125" />
            </DockIcon>
          </Dock>
        </CanvasArea>

        <Splitter $w={4}>
          <SplitterGrip>▸</SplitterGrip>
        </Splitter>

        <RightPanel>
          <CloseBar>×</CloseBar>
          <RightTitle>显示设置</RightTitle>
          <RightTabs>
            <RightTab $active>图元显示</RightTab>
            <RightTab>楼层显示</RightTab>
          </RightTabs>
          <RightBody>
            <LayerTable>
              <LayerHead>图层构件</LayerHead>
              <LayerHead $active>显示图元</LayerHead>
              <LayerHead>显示名称</LayerHead>
              {layers1.map((n, i) => (
                <React.Fragment key={n}>
                  <LayerLeaf name={n} end={i === layers1.length - 1} />
                  <Check state={n === "栏杆扶手" ? "on" : "off"} />
                  <Check />
                </React.Fragment>
              ))}
              <LayerName>
                <Guide $ml={9} $end />
                <ExpandBox $ml={2}>−</ExpandBox>
                <span>自定义</span>
              </LayerName>
              <Check state="part" />
              <Check />
              {layers2.map((n, i) => (
                <React.Fragment key={n}>
                  <LayerLeaf name={n} end={i === layers2.length - 1} outer={false} />
                  <Check state={n === "尺寸标注" ? "on" : "off"} />
                  <Check state={n === "尺寸标注" ? "off2" : "off"} />
                </React.Fragment>
              ))}
            </LayerTable>
            <RightScroll>
              <ArrowUp />
              <RightThumbSpace />
              <Thumb $h={70} $w={7} />
              <RightScrollEnd />
            </RightScroll>
          </RightBody>
          <ResetRow>
            <ResetButton>恢复默认设置</ResetButton>
          </ResetRow>
        </RightPanel>
      </Main>

      <Meter>
        <MeterPill>
          <MeterLine>
            <svg width="8" height="8" viewBox="0 0 8 8">
              <path d="M4 0l4 4H5.500v4h-3V4H0z" fill="#3aa7e8" />
            </svg>
            <MeterRate>
              <b>0</b>K/s
            </MeterRate>
          </MeterLine>
          <MeterLine>
            <svg width="8" height="8" viewBox="0 0 8 8">
              <path d="M4 8L0 4h2.500V0h3v4H8z" fill="#36a848" />
            </svg>
            <MeterRate>
              <b>0</b>K/s
            </MeterRate>
          </MeterLine>
        </MeterPill>
        <MeterDial viewBox="0 0 61 61">
          <defs>
            <linearGradient id="ring" x1="0" y1="1" x2="1" y2="0">
              <stop offset="0" stopColor="#f0b040" />
              <stop offset="0.5" stopColor="#b8d860" />
              <stop offset="1" stopColor="#38d0b0" />
            </linearGradient>
          </defs>
          <circle cx="30.500" cy="30.500" r="30" fill="#50535e" />
          <circle cx="30.500" cy="30.500" r="25" fill="none" stroke="#5d616c" strokeWidth="1.500" />
          <path d="M30.500 5.500A25 25 0 1 1 7 39" fill="none" stroke="url(#ring)" strokeWidth="1.500" />
          <text x="26" y="40" fontSize="29" fill="#fff" textAnchor="middle" fontFamily="Roboto, sans-serif" fontWeight="100">
            71
          </text>
          <text x="46" y="40" fontSize="9" fill="#fff" textAnchor="middle" fontFamily="Liberation Sans, sans-serif">
            %
          </text>
        </MeterDial>
      </Meter>
    </Page>
  );
}
